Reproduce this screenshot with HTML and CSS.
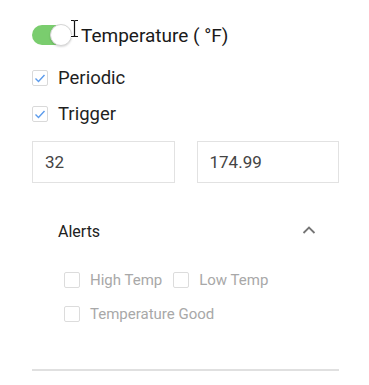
FILE: index.html
```html
<!DOCTYPE html>
<html lang="en">
<head>
    <meta charset="UTF-8">
    <title>Temperature Sensor</title>
    <link rel="stylesheet" href="styles.css">
</head>
<body>
<div class="sensor-panel">
    <div class="toggle-row">
        <span class="toggle on"><span class="toggle-knob"></span></span>
        <span class="toggle-label">Temperature ( °F)</span>
        <svg class="cursor" width="9" height="19" viewBox="0 0 9 19">
            <path d="M1 1.5h2.5c.5 0 1 .5 1 1c0-.5.5-1 1-1H8M4.5 2.5v14M1 17.5h2.5c.5 0 1-.5 1-1c0 .5.5 1 1 1H8" fill="none" stroke="#fff" stroke-width="3"/>
            <path d="M1 1.5h2.5c.5 0 1 .5 1 1c0-.5.5-1 1-1H8M4.5 2.5v14M1 17.5h2.5c.5 0 1-.5 1-1c0 .5.5 1 1 1H8" fill="none" stroke="#111" stroke-width="1.2"/>
        </svg>
    </div>

    <label class="check-row">
        <span class="check-box checked">
            <svg width="14" height="14" viewBox="0 0 14 14"><path d="M2.5 7.5l3 3l6-6.5" fill="none" stroke="#5b9bec" stroke-width="1.4"/></svg>
        </span>
        <span class="check-label">Periodic</span>
    </label>
    <label class="check-row">
        <span class="check-box checked">
            <svg width="14" height="14" viewBox="0 0 14 14"><path d="M2.5 7.5l3 3l6-6.5" fill="none" stroke="#5b9bec" stroke-width="1.4"/></svg>
        </span>
        <span class="check-label">Trigger</span>
    </label>

    <div class="range-inputs">
        <input class="range-field" type="text" value="32">
        <input class="range-field" type="text" value="174.99">
    </div>

    <div class="alerts-panel">
        <div class="alerts-header">
            <span class="alerts-title">Alerts</span>
            <svg class="chevron" width="14" height="8" viewBox="0 0 14 8"><path d="M1.5 7l5.5-5.5l5.5 5.5" fill="none" stroke="#757575" stroke-width="1.8"/></svg>
        </div>
        <div class="alerts-list">
            <div class="alerts-row">
                <label class="alert-option"><span class="check-box disabled"></span><span class="alert-label">High Temp</span></label>
                <label class="alert-option"><span class="check-box disabled"></span><span class="alert-label">Low Temp</span></label>
            </div>
            <div class="alerts-row">
                <label class="alert-option"><span class="check-box disabled"></span><span class="alert-label">Temperature Good</span></label>
            </div>
        </div>
    </div>

    <div class="divider"></div>
</div>
</body>
</html>
```

FILE: styles.css
```css
body {
    margin: 0;
    padding: 0;
    background-color: #ffffff;
    font-family: Roboto, "Noto Sans", Arial, sans-serif;
    color: #212121;
}
.sensor-panel {
    width: 307px;
    padding: 25px 0 0 32px;
}
.toggle-row {
    position: relative;
    display: flex;
    align-items: center;
    height: 20px;
    gap: 10px;
}
.toggle {
    position: relative;
    display: inline-block;
    width: 39px;
    height: 20px;
    border-radius: 10px;
    background-color: #7acd6e;
}
.toggle-knob {
    position: absolute;
    top: -1px;
    right: -1px;
    width: 20px;
    height: 20px;
    border-radius: 50%;
    background-color: #ffffff;
    border: 1px solid #d6d6d6;
    box-shadow: 0 1px 2px rgba(0, 0, 0, 0.15);
}
.toggle-label {
    font-size: 19px;
    color: #1a1a1a;
}
.cursor {
    position: absolute;
    left: 38px;
    top: -6px;
}
.check-row {
    display: flex;
    align-items: center;
    height: 36px;
    gap: 10px;
}
.check-row:first-of-type {
    margin-top: 15px;
}
.check-box {
    display: inline-flex;
    align-items: center;
    justify-content: center;
    box-sizing: border-box;
    width: 16px;
    height: 16px;
    border: 1px solid #d9d9d9;
    border-radius: 2px;
    background-color: #ffffff;
    flex-shrink: 0;
}
.check-label {
    font-size: 18.5px;
    color: #1f1f1f;
}
.range-inputs {
    display: flex;
    gap: 22px;
    margin-top: 9px;
}
.range-field {
    flex: 1;
    min-width: 0;
    box-sizing: border-box;
    height: 42px;
    padding: 0 12px;
    border: 1px solid #e2e2e2;
    font-family: Roboto, "Noto Sans", Arial, sans-serif;
    font-size: 17px;
    color: #444444;
    outline: none;
}
.alerts-panel {
    margin-top: 17px;
}
.alerts-header {
    display: flex;
    align-items: center;
    justify-content: space-between;
    height: 63px;
    padding: 0 23px 0 26px;
}
.alerts-title {
    font-size: 16px;
    color: #212121;
}
.chevron {
    margin-top: -3px;
}
.alerts-list {
    padding-left: 32px;
}
.alerts-row {
    display: flex;
    align-items: center;
    height: 34px;
    gap: 11px;
}
.alert-option {
    display: flex;
    align-items: center;
    gap: 10px;
}
.check-box.disabled {
    border-color: #dcdcdc;
}
.alert-label {
    font-size: 15px;
    color: #a8a8a8;
}
.divider {
    margin-top: 38px;
    height: 2px;
    background-color: #e0e0e0;
}
```
